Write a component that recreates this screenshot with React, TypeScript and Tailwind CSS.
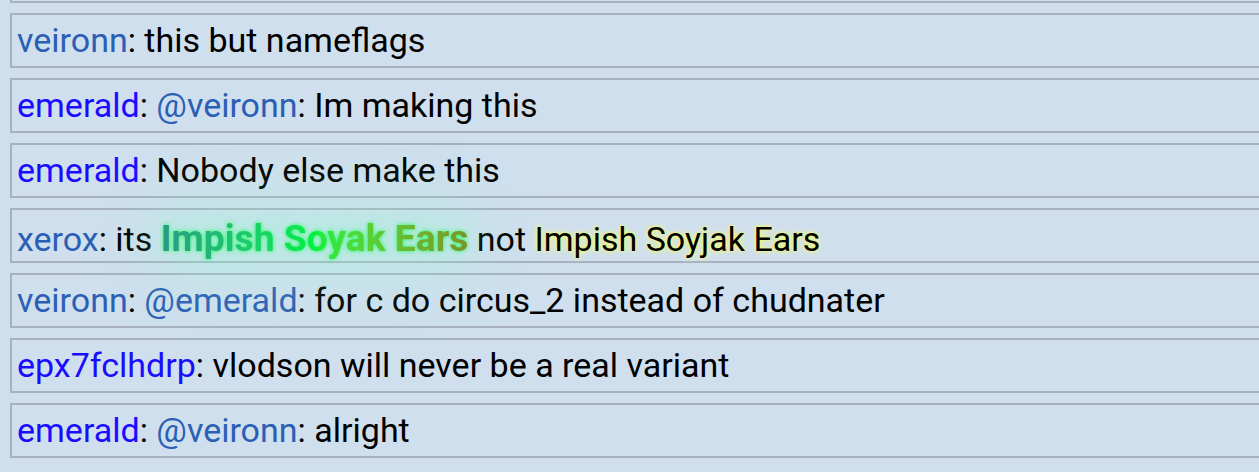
const tags: Record<string, string> = {
  veironn: "text-[#2b5fb4]",
  xerox: "text-[#2b5fb4]",
  emerald: "text-[#1a0dff]",
  epx7fclhdrp: "text-[#1a0dff]",
};

type Msg = { user: string; mention?: string; text: React.ReactNode; low?: boolean };

const messages: Msg[] = [
  { user: "veironn", text: "this but nameflags" },
  { user: "emerald", mention: "veironn", text: "Im making this" },
  { user: "emerald", text: "Nobody else make this" },
  {
    user: "xerox",
    low: true,
    text: (
      <>
        its{" "}
        <span className="relative z-10 text-[37.2px] font-bold bg-gradient-to-r from-[#2a9a86] via-[#00f040] to-[#7a9428] bg-clip-text text-transparent [filter:drop-shadow(0_0_2px_#10ff50)_drop-shadow(0_0_18px_rgba(120,255,190,0.5))_drop-shadow(0_0_40px_rgba(150,255,210,0.9))]">
          Impish Soyak Ears
        </span>{" "}
        not{" "}
        <span className="[text-shadow:0_0_3px_#f4ff40,0_0_6px_#f6ff80]">
          Impish Soyjak Ears
        </span>
      </>
    ),
  },
  { user: "veironn", mention: "emerald", text: "for c do circus_2 instead of chudnater" },
  { user: "epx7fclhdrp", text: "vlodson will never be a real variant" },
  { user: "emerald", mention: "veironn", text: "alright" },
];

function Row({ msg }: { msg: Msg }) {
  return (
    <div
      className={`h-[55px] border-2 border-r-0 border-[#a7b1bf] bg-[#cfdfee] pl-[5px] leading-[51px] whitespace-nowrap ${
        msg.low ? "pt-[3px]" : ""
      }`}
    >
      <span className={tags[msg.user]}>{msg.user}</span>
      <span>: </span>
      {msg.mention && (
        <>
          <span className="text-[#2b5fb4]">@{msg.mention}</span>
          <span>: </span>
        </>
      )}
      <span>{msg.text}</span>
    </div>
  );
}

export default function App() {
  return (
    <div
      className="h-[472px] w-[1259px] overflow-hidden bg-[#cfdfee] text-[34px] text-black"
      style={{ fontFamily: "Roboto, 'Noto Sans', sans-serif" }}
    >
      <div className="-mt-[52px] flex flex-col gap-[10px] pl-[10px]">
        <div className="h-[55px] border-2 border-r-0 border-[#a7b1bf] bg-[#cfdfee]" />
        {messages.map((m, i) => (
          <Row key={i} msg={m} />
        ))}
      </div>
    </div>
  );
}
